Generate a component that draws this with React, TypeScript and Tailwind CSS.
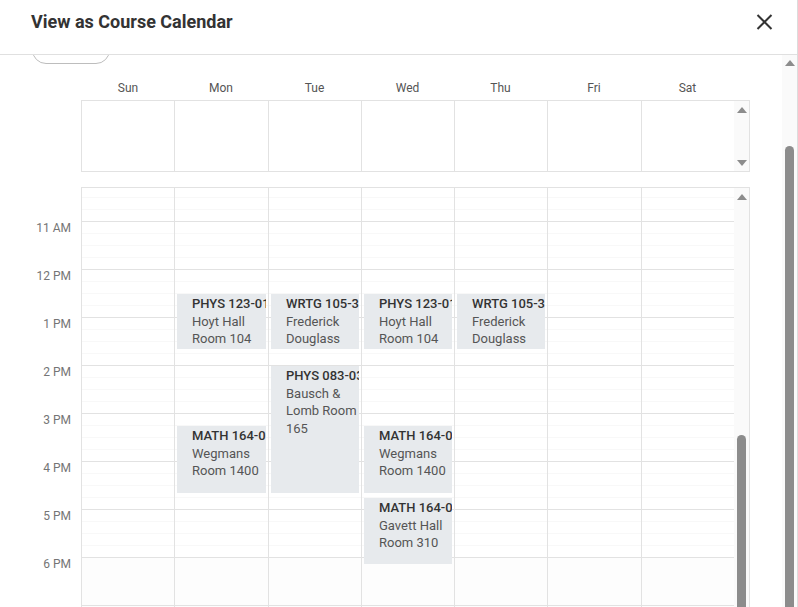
const days = ["Sun", "Mon", "Tue", "Wed", "Thu", "Fri", "Sat"]
const colTemplate = "grid-cols-[92px_94px_93px_93px_93px_94px_93px]"
const hours = ["11 AM", "12 PM", "1 PM", "2 PM", "3 PM", "4 PM", "5 PM", "6 PM", ""]

type Ev = { title: string; lines: string; top: number; h: number }

const events: Record<number, Ev[]> = {
  1: [
    { title: "PHYS 123-01", lines: "Hoyt Hall Room 104", top: 106, h: 55 },
    { title: "MATH 164-01", lines: "Wegmans Room 1400", top: 238, h: 67 },
  ],
  2: [
    { title: "WRTG 105-31", lines: "Frederick Douglass", top: 106, h: 55 },
    { title: "PHYS 083-03", lines: "Bausch & Lomb Room 165", top: 178, h: 127 },
  ],
  3: [
    { title: "PHYS 123-01", lines: "Hoyt Hall Room 104", top: 106, h: 55 },
    { title: "MATH 164-01", lines: "Wegmans Room 1400", top: 238, h: 67 },
    { title: "MATH 164-02", lines: "Gavett Hall Room 310", top: 310, h: 66 },
  ],
  4: [{ title: "WRTG 105-31", lines: "Frederick Douglass", top: 106, h: 55 }],
}

function Up() {
  return (
    <svg width="10" height="6" viewBox="0 0 10 6">
      <path d="M5 0 L10 6 L0 6 Z" fill="#8c8c8c" />
    </svg>
  )
}

function Down() {
  return (
    <svg width="10" height="6" viewBox="0 0 10 6">
      <path d="M0 0 L10 0 L5 6 Z" fill="#8c8c8c" />
    </svg>
  )
}

// faint quarter-hour rules
const quarter = "bg-[repeating-linear-gradient(to_bottom,transparent_0px,transparent_11px,#f8f8f8_11px,#f8f8f8_12px)]"
const quarterTop = "bg-[repeating-linear-gradient(to_top,transparent_0px,transparent_11px,#f8f8f8_11px,#f8f8f8_12px)]"

function DayColumn({ idx }: { idx: number }) {
  return (
    <div className={`relative ${idx > 0 ? "border-l border-[#e2e2e2]" : ""}`}>
      <div className={`h-[33px] ${quarterTop}`} />
      {hours.map((h, i) => (
        <div
          key={i}
          className={`h-[48px] border-t border-[#e2e2e2] ${i >= 7 ? "bg-[#fdfdfd]" : quarter}`}
        />
      ))}
      {(events[idx] || []).map((e, i) => (
        <div
          key={i}
          className="absolute left-[2px] right-[2px] bg-[#e7eaed] pl-[15px] pt-[1px] overflow-hidden text-[13px] leading-[17.5px]"
          style={{ top: e.top, height: e.h }}
        >
          <div className="whitespace-nowrap font-medium text-[#333]">{e.title}</div>
          <div className="text-[#555]">{e.lines}</div>
        </div>
      ))}
    </div>
  )
}

export default function App() {
  return (
    <div className="w-[798px] h-[607px] bg-white border-r border-[#dcdcdc] overflow-hidden font-['Roboto',sans-serif]">
      <div className="h-[55px] border-b border-[#e0e0e0] flex justify-between pl-[31px] pr-[24px]">
        <h1 className="pt-[11px] text-[18px] leading-[22px] font-bold text-[#333]">View as Course Calendar</h1>
        <svg className="mt-[14px]" width="17" height="16" viewBox="0 0 17 16">
          <path d="M1.5 1 L15.5 15 M15.5 1 L1.5 15" stroke="#333" strokeWidth="2" />
        </svg>
      </div>

      <div className="h-[552px] flex overflow-hidden">
        <div className="w-[782px] overflow-hidden">
          <div className="ml-[32px] -mt-[23px] h-[32px] w-[78px] rounded-[14px] border border-[#bdbdbd]" />

          <div className={`mt-[17px] ml-[82px] w-[652px] grid ${colTemplate} text-[12px] leading-[14px] text-[#555]`}>
            {days.map((d) => (
              <div key={d} className="text-center">{d}</div>
            ))}
          </div>

          <div className="mt-[5px] ml-[81px] w-[669px] h-[72px] border border-[#e2e2e2] flex">
            <div className={`w-[652px] grid ${colTemplate}`}>
              {days.map((d, i) => (
                <div key={d} className={i > 0 ? "border-l border-[#e2e2e2]" : ""} />
              ))}
            </div>
            <div className="w-[15px] bg-[#fafafa] flex flex-col items-center justify-between pt-[6px] pb-[5px]">
              <Up />
              <Down />
            </div>
          </div>

          <div className="mt-[15px] flex">
            <div className="w-[81px] pt-[34px] text-[12px] leading-[14px] text-[#757575]">
              {hours.map((h, i) => (
                <div key={i} className="h-[48px] text-right pr-[10px]">{h}</div>
              ))}
            </div>
            <div className="w-[669px] border-l border-t border-r border-[#e2e2e2] flex">
              <div className={`w-[652px] grid ${colTemplate}`}>
                {days.map((d, i) => (
                  <DayColumn key={d} idx={i} />
                ))}
              </div>
              <div className="w-[15px] bg-[#fafafa] flex flex-col items-center pt-[6px]">
                <Up />
                <div className="mt-[235px] w-[9px] h-[200px] rounded-t-full bg-[#8c8c8c]" />
              </div>
            </div>
          </div>
        </div>

        <div className="w-[15px] bg-[#fafafa] flex flex-col items-center pt-[5px]">
          <Up />
          <div className="mt-[80px] w-[9px] flex-1 rounded-t-full bg-[#8c8c8c]" />
        </div>
      </div>
    </div>
  )
}
